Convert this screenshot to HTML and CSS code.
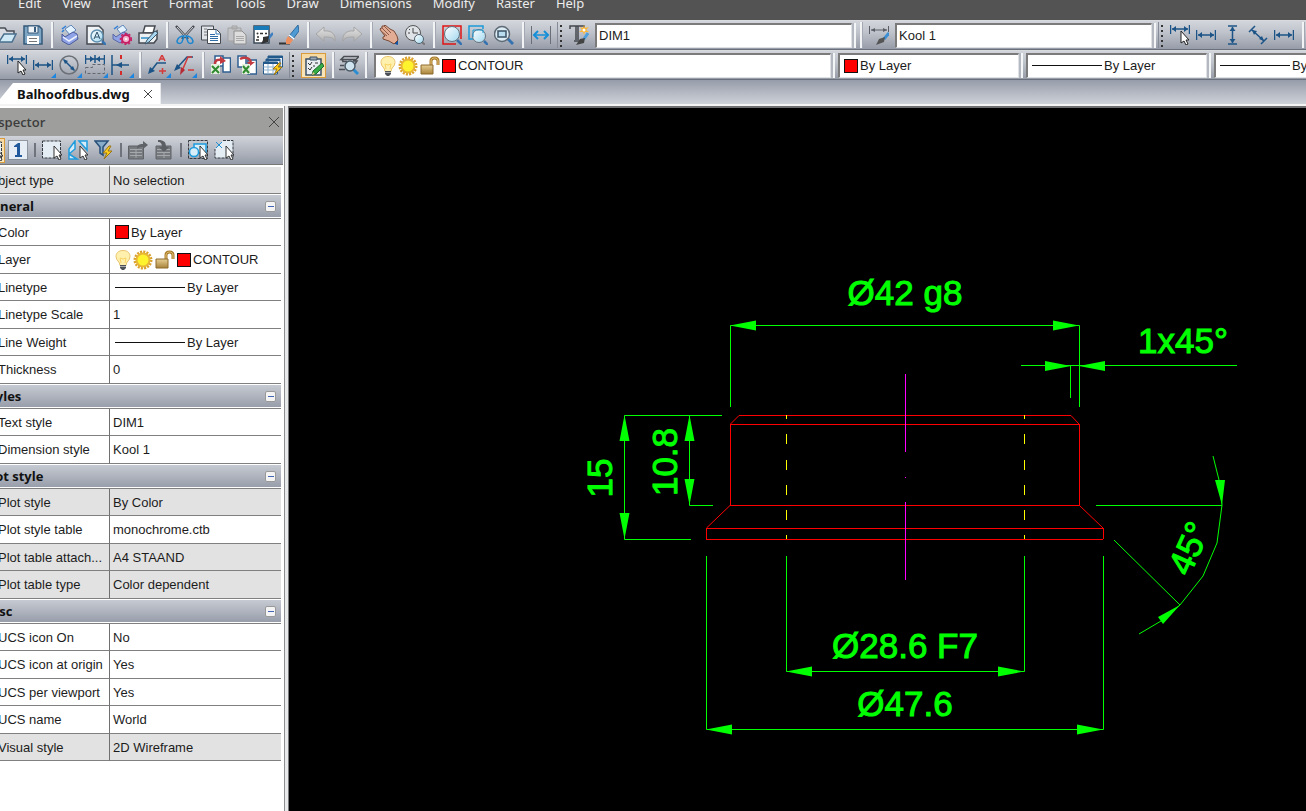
FILE: index.html
```html
<!DOCTYPE html>
<html lang="en">
<head>
  <meta charset="UTF-8">
  <title>Balhoofdbus.dwg</title>
  <link rel="stylesheet" href="styles.css">
</head>
<body>
  <!-- icon set -->
  <svg class="defs" width="0" height="0">
    <defs>
      <linearGradient id="glass" x1="0" y1="0" x2="1" y2="1"><stop offset="0" stop-color="#fff"/><stop offset="1" stop-color="#9fd8f0"/></linearGradient>
      <linearGradient id="gold" x1="0" y1="0" x2="0" y2="1"><stop offset="0" stop-color="#e8cf95"/><stop offset="1" stop-color="#a8823a"/></linearGradient>
      <linearGradient id="grey" x1="0" y1="0" x2="0" y2="1"><stop offset="0" stop-color="#e2e2e2"/><stop offset="1" stop-color="#b4b4b4"/></linearGradient>
    </defs>
    <symbol id="open" viewBox="0 0 20 20"><path d="M1 16V3h7l2 3h7v3" fill="#d8dce2" stroke="#4a4f57" stroke-width="1.5"/><path d="M2 17L7 9h12l-4 8z" fill="#cfe9f7" stroke="#4a6f8f" stroke-width="1.5"/></symbol>
    <symbol id="save" viewBox="0 0 20 20"><path d="M1 1h15l3 3v15H1z" fill="#7fa6c4" stroke="#35597a" stroke-width="1.5"/><path d="M5 1h10v7H5z" fill="#eef3f7" stroke="#35597a"/><path d="M11 2h2v5h-2z" fill="#35597a"/><path d="M4 11h12v8H4z" fill="#fff"/><path d="M6 13.5h8M6 16.5h8" stroke="#777"/></symbol>
    <symbol id="printer" viewBox="0 0 20 20"><path d="M5 4l6-4 5 5-6 5z" fill="#e3f2ff" stroke="#5f83b5"/><path d="M2 9l3 3 8-5 4 2 1 5-9 6-7-4z" fill="#8fa3e6" stroke="#4a5a9c"/><path d="M3 12l6 4 8-5" fill="none" stroke="#eef2ff" stroke-width="1.5"/><path d="M2 4l4-3M2 7l2-2" stroke="#2f7fd8" stroke-width="1.5"/></symbol>
    <symbol id="preview" viewBox="0 0 20 20"><path d="M1 1h12l4 4v14H1z" fill="#f0f3f6" stroke="#454a50" stroke-width="1.5"/><path d="M16 16l4 4" stroke="#3572b0" stroke-width="2.5"/><circle cx="11" cy="11" r="6" fill="url(#glass)" stroke="#5f8fae" stroke-width="1.5"/><path d="M8 14l3-7 3 7M9 12h4" fill="none" stroke="#30506a"/></symbol>
    <symbol id="printset" viewBox="0 0 20 20"><path d="M5 4l6-4 4 5-6 4z" fill="#e3f2ff" stroke="#5f83b5"/><path d="M1 9l3 3 7-5 5 2 0 4-8 5-7-4z" fill="#8fa3e6" stroke="#5a68a5"/><path d="M2 4l4-3" stroke="#2f7fd8" stroke-width="1.5"/><circle cx="14" cy="14" r="4" fill="#f3b7d0" stroke="#c81e63" stroke-width="2"/><circle cx="14" cy="14" r="5.5" fill="none" stroke="#c81e63" stroke-width="1.5" stroke-dasharray="2 2"/><circle cx="14" cy="14" r="1" fill="#fff"/></symbol>
    <symbol id="batch" viewBox="0 0 20 20"><path d="M5 8l2-7h10l-2 7z" fill="#fff" stroke="#454a50" stroke-width="1.5"/><path d="M1 8h15l3-2v8l-3 4H1z" fill="#eceff2" stroke="#454a50" stroke-width="1.5"/><path d="M3 13h10" stroke="#2f8fc8" stroke-width="1.5"/><path d="M20 8l-9 9-4 2 2-4 8-9z" fill="#a9d8f2" stroke="#3c5468"/></symbol>
    <symbol id="cut" viewBox="0 0 20 20"><path d="M1 1l12 13M19 1L7 14" stroke="#44484e" stroke-width="2.5"/><path d="M2 2l10 11M18 2L8 13" stroke="#d5d8dc"/><path d="M9 11c-3 0-6 2-7 5 0 3 4 3 5 1zM11 11c3 0 6 2 7 5 0 3-4 3-5 1z" fill="none" stroke="#1d86d0" stroke-width="1.5"/></symbol>
    <symbol id="copy" viewBox="0 0 20 20"><path d="M.5 1h12v14H.5z" fill="#e1e5ea" stroke="#454a50"/><path d="M3 4h3M3 7h3M3 10h3" stroke="#777"/><path d="M6.5 4.5h9l4 4v10h-13z" fill="#fff" stroke="#454a50"/><path d="M15 5v4h4" fill="none" stroke="#3578b5"/><path d="M9 9.5h5M9 11.5h8M9 13.5h8M9 15.5h8" stroke="#2f6da8"/></symbol>
    <symbol id="paste" viewBox="0 0 20 20"><path d="M1 3h13v13H1zM5 1h5v3H5z" fill="#c3c4c7" stroke="#a3a3a3"/><path d="M7 6h8l4 4v9H7z" fill="#ddd" stroke="#8e8e8e"/><path d="M9 11.5h8M9 13.5h8M9 15.5h8" stroke="#aaa"/></symbol>
    <symbol id="props" viewBox="0 0 20 20"><path d="M1 1h15v17H1z" fill="#fff" stroke="#3b4a58" stroke-width="1.5"/><path d="M1 1h15v4H1z" fill="#197bb8"/><circle cx="4.5" cy="8.5" r="1" fill="#333"/><path d="M7 8.5h3M12 8.5h2M4 12h2M3 15h3" stroke="#333" stroke-width="1.5"/><path d="M20 8l-5 6" stroke="#3c7ec0" stroke-width="2.5"/><path d="M16 11l-6 1 0 3-2 4 7-2z" fill="#333"/></symbol>
    <symbol id="erase" viewBox="0 0 20 20"><path d="M0 18.5h11" stroke="#333" stroke-width="2"/><path d="M19 0l1 6-6 8-4-3z" fill="#4d9ad4" stroke="#2e6a9c"/><path d="M9 11l5 4-3 4H7V15z" fill="#ee8e5d"/><path d="M10 10l5 4" stroke="#fff" stroke-width="1.5"/></symbol>
    <symbol id="undo" viewBox="0 0 20 20"><path d="M0 9l8-7v4c8-1 12 4 11 10-2-4-6-4-11-4v4z" fill="url(#grey)" stroke="#a5a5a5"/></symbol>
    <symbol id="redo" viewBox="0 0 20 20"><path d="M20 9l-8-7v4C4 5 0 10 1 16c2-4 6-4 11-4v4z" fill="url(#grey)" stroke="#a5a5a5"/></symbol>
    <symbol id="hand" viewBox="0 0 20 20"><path d="M13 18l6-5v7z" fill="#1252a5"/><path d="M1 4l1-1 1 0 0-2 2 0 1-1 5 4 4 2 3 5 1 4-4 4-5-3-6-2 0-2 2-1-4-5z" fill="#e2ad94" stroke="#7a4a38"/><path d="M3 3l7 7M5 1l7 7M2 6l6 5" stroke="#8e5946"/></symbol>
    <symbol id="zoomtime" viewBox="0 0 20 20"><circle cx="8" cy="8" r="7.5" fill="#dfe3e8" stroke="#555"/><path d="M8 3v5h5M3 8h2M4 4l1 1" fill="none" stroke="#444"/><path d="M17 17l3 3" stroke="#777" stroke-width="2"/><circle cx="14" cy="14" r="4.5" fill="url(#glass)" stroke="#51606d"/></symbol>
    <symbol id="zoomext" viewBox="0 0 20 20"><path d="M14 19H1V1h18v13" fill="none" stroke="#e01414" stroke-width="1.5"/><path d="M15 15l5 5" stroke="#3572b0" stroke-width="2.5"/><circle cx="10" cy="9" r="7.5" fill="url(#glass)" stroke="#66727d"/></symbol>
    <symbol id="zoomwin" viewBox="0 0 20 20"><path d="M5 14H1V1h14v3" fill="none" stroke="#1d9bd8" stroke-width="1.5"/><path d="M16 16l4 4" stroke="#3572b0" stroke-width="2.5"/><circle cx="11" cy="11" r="6.5" fill="url(#glass)" stroke="#66727d"/><path d="M5 5h10v3M5 5v7" fill="none" stroke="#1d9bd8"/></symbol>
    <symbol id="zoomprev" viewBox="0 0 20 20"><path d="M13 13l6 6" stroke="#3572b0" stroke-width="3"/><circle cx="8" cy="9" r="7.5" fill="#dcecf4" stroke="#5e6a75" stroke-width="1.5"/><path d="M4 6h8v6H4z" fill="#b9ddee" stroke="#3b5166" stroke-width="1.5"/></symbol>
    <symbol id="dist" viewBox="0 0 20 20"><path d="M.5 1v18M19.5 1v18" stroke="#6a6f77"/><path d="M4 10h12" stroke="#158fd8" stroke-width="1.5"/><path d="M7 6l-4 4 4 4M13 6l4 4-4 4" fill="none" stroke="#158fd8" stroke-width="2"/></symbol>
    <symbol id="tstyle" viewBox="0 0 20 20"><path d="M1 4V1h14v3M7 1v14M9 1v14M5 16h6" fill="none" stroke="#44484e" stroke-width="1.5"/><path d="M19 8l-4 6" stroke="#4ba0dd" stroke-width="3"/><path d="M16 13l-5 1-4 6 8-2z" fill="#444"/><path d="M15 0l1 3 4-1-3 3 3 2-4 0-1 3-1-3-4 0 3-2-2-3 3 1z" fill="#ffb52e"/><circle cx="15" cy="5" r="1.5" fill="#fff"/></symbol>
    <symbol id="dimstyle" viewBox="0 0 20 20"><path d="M.5 1v8M19.5 1v6M2 5h16" stroke="#5b5f65"/><path d="M2 5l4-2v4zM18 5l-4-2v4z" fill="#5b5f65"/><path d="M20 8l-5 6" stroke="#3c8fd4" stroke-width="3"/><path d="M16 12l-6 2-3 6 8-3z" fill="#555"/></symbol>
    <symbol id="dimh" viewBox="0 0 20 20"><path d="M.5 5v10M19.5 5v10M2 10h16" stroke="#1c5487" stroke-width="1.5"/><path d="M2 10l4-3v6zM18 10l-4-3v6z" fill="#1c5487"/></symbol>
    <symbol id="dimv" viewBox="0 0 20 20"><path d="M6 1h9M6 19h9M10.5 2v16" stroke="#1c5487" stroke-width="1.5"/><path d="M10.5 2l-3 4h6zM10.5 18l-3-4h6z" fill="#1c5487"/></symbol>
    <symbol id="dima" viewBox="0 0 20 20"><path d="M1 7l6-6M13 19l6-6M4 5l12 11" stroke="#1c5487" stroke-width="1.5"/><path d="M4 5l2 5 3-4zM16 16l-5-2 3-3z" fill="#1c5487"/></symbol>
    <symbol id="dimpick" viewBox="0 0 20 20"><path d="M.5 0v9M19.5 0v9M2 4h16" stroke="#1c5487" stroke-width="1.5"/><path d="M2 4l4-3v6zM18 4l-4-3v6z" fill="#1c5487"/><path d="M11 6v12l3-2 2 4 2-1-2-4h3z" fill="#fff" stroke="#222"/></symbol>
    <symbol id="dimdia" viewBox="0 0 20 20"><circle cx="10" cy="10" r="9" fill="none" stroke="#6c7178" stroke-width="1.5"/><path d="M5 5l10 10" stroke="#1c5487" stroke-width="1.5"/><path d="M4 4l2 5 3-3zM16 16l-2-5-3 3z" fill="#1c5487"/></symbol>
    <symbol id="dimbase" viewBox="0 0 20 20"><path d="M.5 0v9M10 0v8M19.5 0v9M1 4h18" stroke="#1c5487" stroke-width="1.5"/><path d="M9 4L5 1v6zM11 4l4-3v6z" fill="#1c5487"/><path d="M.5 12.5h7v-3h12v9H.5z" fill="none" stroke="#62676f" stroke-dasharray="3 2"/></symbol>
    <symbol id="dimbreak" viewBox="0 0 20 20"><path d="M1 0v20M1 10h17" stroke="#1c5487" stroke-width="1.5"/><path d="M5 10l6-3v6z" fill="#1c5487"/><path d="M10 0v4M10 16v4" stroke="#d42a2a" stroke-width="2"/></symbol>
    <symbol id="leadadd" viewBox="0 0 20 20"><path d="M3 16L9 8h9" fill="none" stroke="#1c5487" stroke-width="1.5"/><path d="M0 19l2-7 5 4z" fill="#1c5487"/><path d="M11 6l3-6 3 6M12 4h4M11 16h7M14.5 13v6" fill="none" stroke="#d43b3b" stroke-width="1.5"/></symbol>
    <symbol id="leaddel" viewBox="0 0 20 20"><path d="M2 14L13 2h6" fill="none" stroke="#1c5487" stroke-width="1.5"/><path d="M0 16l3-7 4 4z" fill="#1c5487"/><path d="M8 16l6-14h4M14 15h6" fill="none" stroke="#d43b3b" stroke-width="1.5"/><path d="M6 20l1-8 4 3z" fill="#b52a35"/></symbol>
    <symbol id="xlsout" viewBox="0 0 20 20"><path d="M12 3h7.5v14H12zM4 1h8v10H4z" fill="#fff" stroke="#2f5f91" stroke-width="1.5"/><path d="M4 9c0-4 3-5 7-4" fill="none" stroke="#c23a40" stroke-width="2.5"/><path d="M9 1l6 5-6 3z" fill="#c23a40"/><path d="M0 9h9v10H0z" fill="#e5f0df"/><path d="M1 11l7 7M8 11l-7 7" stroke="#2f8a2f" stroke-width="2"/></symbol>
    <symbol id="xlsin" viewBox="0 0 20 20"><path d="M1 1h8v11H1zM11 5h8.5v14H11z" fill="#fff" stroke="#2f5f91" stroke-width="1.5"/><path d="M3 4c4-2 9-2 11 3" fill="none" stroke="#c23a40" stroke-width="2.5"/><path d="M10 7h8l-5 4z" fill="#c23a40"/><path d="M5 9h8v10H5z" fill="#e5f0df"/><path d="M6 11l6 7M12 11l-6 7" stroke="#2f8a2f" stroke-width="2"/></symbol>
    <symbol id="tables" viewBox="0 0 20 20"><path d="M5 1h14.5v11H5zM3 4h14v11H3z" fill="#e7f1f9" stroke="#23588a"/><path d="M.5 7h14v12H.5z" fill="#fff" stroke="#23588a"/><path d="M.5 8h14M3 5h14M5 2h14" stroke="#23588a" stroke-width="2"/><path d="M.5 12h14M.5 15h14M5 9v10M10 9v10" stroke="#8fb2d1"/><path d="M16 8l-6 6h4l-3 6 8-8h-4l3-4z" fill="#ffcf1a" stroke="#9a7414"/></symbol>
    <symbol id="check" viewBox="0 0 20 20"><path d="M2 3h15v16H2z" fill="#e9eef3" stroke="#3c5266" stroke-width="1.5"/><path d="M6 1h7v3H6z" fill="#9aa6b2" stroke="#3c5266"/><path d="M4 7l2 2 2-3M4 12l2 2 2-3M11 7h3M9 10h2" fill="none" stroke="#333"/><path d="M18 7l2 3-8 8-4 1 1-4z" fill="#35ab45" stroke="#1d6a2a"/><path d="M8 19l1-3 2 2z" fill="#eec48b"/></symbol>
    <symbol id="layers" viewBox="0 0 20 20"><path d="M5 1.5h15l-3 3H2zM3 6.5h5M1 10.5h4M0 14.5h6M3 6l2-2M14 6h4l-2 3" fill="none" stroke="#4b4f55" stroke-width="1.5"/><path d="M14 14l5 5" stroke="#2c8ed0" stroke-width="3"/><circle cx="11" cy="11" r="5" fill="#cfe4ef" stroke="#4b5a67" stroke-width="1.5"/></symbol>
    <symbol id="bulb" viewBox="0 0 16 20"><path d="M8 .5c5 0 7 3 7 6 0 4-4 5-4 9H5c0-4-4-5-4-9 0-3 2-6 7-6z" fill="#fff0ae" stroke="#e8c46b"/><path d="M6 13l-1-5 3 1 3-1-1 5" fill="none" stroke="#f8d463"/><path d="M5 15h6v3l-2 2H7l-2-2z" fill="#4d5158"/><path d="M5 16.5h6" stroke="#aaa"/></symbol>
    <symbol id="sun" viewBox="0 0 20 20"><circle cx="10" cy="10" r="8" fill="none" stroke="#dba12d" stroke-width="3" stroke-dasharray="2 1.14"/><circle cx="10" cy="10" r="7.5" fill="#e8b637"/><circle cx="10" cy="10" r="5.5" fill="#fff32e"/></symbol>
    <symbol id="lock" viewBox="0 0 20 20"><path d="M11 9V5c0-4 7-4 7 0v4" fill="none" stroke="#a87a28" stroke-width="3"/><path d="M11 9V5c0-4 7-4 7 0v4" fill="none" stroke="#e2c277"/><path d="M1 9h12v9H1z" fill="url(#gold)" stroke="#8d6a2c"/></symbol>
    <symbol id="one" viewBox="0 0 20 20"><path d="M.5.5h19v19H.5z" fill="#e7edf4" stroke="#4c5663" stroke-dasharray="1 1"/><path d="M6 6l4-3h2v12h2v2H7v-2h2V7H6z" fill="#205a9c"/></symbol>
    <symbol id="pick" viewBox="0 0 20 20"><path d="M.5 1h18v17H.5z" fill="#e4edf3" stroke="#353a40" stroke-dasharray="3 1"/><path d="M12 6v12l3-2 2 4 2-1-2-4h3z" fill="#fff" stroke="#333"/></symbol>
    <symbol id="swap" viewBox="0 0 20 20"><path d="M7 1v8L1 14V9zM1 14l8 5H1zM11 1h8v9z" fill="#d6edf9" stroke="#1e9bdd" stroke-width="1.5"/><path d="M12 6v12l3-2 2 4 2-1-2-4h3z" fill="#fff" stroke="#333"/></symbol>
    <symbol id="filter" viewBox="0 0 20 20"><path d="M1 1h13L9 7v8l-3-2V7z" fill="#87abc9" stroke="#274f78" stroke-width="1.5"/><path d="M15 6l-6 7h4l-3 6 8-8h-4l3-5z" fill="#ffcf1a" stroke="#9a7414"/></symbol>
    <symbol id="sheetout" viewBox="0 0 20 20"><path d="M.5 6h15v13H.5z" fill="#777a7e" stroke="#606367"/><path d="M2 9.5h12M2 12.5h12M2 15.5h12M8 9v9" stroke="#a6a8ab"/><path d="M9 9c0-4 2-5 6-5V1l5 4-5 4V7c-3 0-4 0-6 2z" fill="#5f6266"/></symbol>
    <symbol id="sheetin" viewBox="0 0 20 20"><path d="M2 6h15v13H2z" fill="#777a7e" stroke="#606367"/><path d="M3 9.5h13M3 12.5h13M3 15.5h13M10 11v7" stroke="#a6a8ab"/><path d="M4 0c6 0 8 2 8 7h3l-5 5-5-5h3c0-3-1-5-4-5z" fill="#5b5e62"/></symbol>
    <symbol id="pickobj" viewBox="0 0 20 20"><path d="M.5.5h19v18H.5z" fill="none" stroke="#353a40" stroke-dasharray="3 1"/><path d="M6 4h12v9H6z" fill="#d8effa" stroke="#1e9bdd" stroke-width="1.5"/><circle cx="6" cy="12" r="4.5" fill="#d8effa" stroke="#1e9bdd" stroke-width="1.5"/><path d="M12 6v12l3-2 2 4 2-1-2-4h3z" fill="#fff" stroke="#333"/></symbol>
    <symbol id="pickx" viewBox="0 0 20 20"><path d="M9 .5h10V18H1V9" fill="#e4edf3" stroke="#353a40" stroke-dasharray="3 1"/><path d="M2 2l6 6M8 2L2 8" stroke="#1e8fd0"/><path d="M12 6v12l3-2 2 4 2-1-2-4h3z" fill="#fff" stroke="#333"/></symbol>
  </svg>

  <nav class="menu">
    <a href="#">Edit</a>
    <a href="#">View</a>
    <a href="#">Insert</a>
    <a href="#">Format</a>
    <a href="#">Tools</a>
    <a href="#">Draw</a>
    <a href="#">Dimensions</a>
    <a href="#">Modify</a>
    <a href="#">Raster</a>
    <a href="#">Help</a>
  </nav>

  <div class="toolbar standard">
    <button class="tool" aria-label="Open"><svg><use href="#open"/></svg></button>
    <button class="tool" aria-label="Save"><svg><use href="#save"/></svg></button>
    <span class="sep"></span>
    <button class="tool" aria-label="Print"><svg><use href="#printer"/></svg></button>
    <button class="tool" aria-label="Print preview"><svg><use href="#preview"/></svg></button>
    <button class="tool" aria-label="Print settings"><svg><use href="#printset"/></svg></button>
    <button class="tool" aria-label="Batch print"><svg><use href="#batch"/></svg></button>
    <span class="sep"></span>
    <button class="tool" aria-label="Cut"><svg><use href="#cut"/></svg></button>
    <button class="tool" aria-label="Copy"><svg><use href="#copy"/></svg></button>
    <button class="tool" aria-label="Paste"><svg><use href="#paste"/></svg></button>
    <button class="tool" aria-label="Match properties"><svg><use href="#props"/></svg></button>
    <button class="tool" aria-label="Erase"><svg><use href="#erase"/></svg></button>
    <span class="sep"></span>
    <button class="tool" aria-label="Undo"><svg><use href="#undo"/></svg></button>
    <button class="tool" aria-label="Redo"><svg><use href="#redo"/></svg></button>
    <span class="sep"></span>
    <button class="tool" aria-label="Pan"><svg><use href="#hand"/></svg></button>
    <button class="tool" aria-label="Zoom realtime"><svg><use href="#zoomtime"/></svg></button>
    <span class="sep"></span>
    <button class="tool" aria-label="Zoom extents"><svg><use href="#zoomext"/></svg></button>
    <button class="tool" aria-label="Zoom window"><svg><use href="#zoomwin"/></svg></button>
    <button class="tool" aria-label="Zoom previous"><svg><use href="#zoomprev"/></svg></button>
    <span class="sep"></span>
    <button class="tool" aria-label="Distance"><svg><use href="#dist"/></svg></button>
    <span class="grip"></span>
    <button class="tool" aria-label="Text styles"><svg><use href="#tstyle"/></svg></button>
    <div class="combo style-combo">
      <select aria-label="Text style"><option>DIM1</option></select>
    </div>
    <span class="sep"></span>
    <button class="tool" aria-label="Dimension styles"><svg><use href="#dimstyle"/></svg></button>
    <div class="combo style-combo">
      <select aria-label="Dimension style"><option>Kool 1</option></select>
    </div>
    <span class="grip"></span>
    <button class="tool" aria-label="Smart dimension"><svg><use href="#dimpick"/></svg></button>
    <button class="tool" aria-label="Horizontal dimension"><svg><use href="#dimh"/></svg></button>
    <button class="tool" aria-label="Vertical dimension"><svg><use href="#dimv"/></svg></button>
    <button class="tool" aria-label="Aligned dimension"><svg><use href="#dima"/></svg></button>
    <button class="tool" aria-label="Linear dimension"><svg><use href="#dimh"/></svg></button>
    <span class="sep"></span>
  </div>

  <div class="toolbar layers">
    <button class="tool" aria-label="Smart dimension"><svg><use href="#dimpick"/></svg></button>
    <button class="tool drop" aria-label="Linear dimension"><svg><use href="#dimh"/></svg></button>
    <button class="tool drop" aria-label="Diameter dimension"><svg><use href="#dimdia"/></svg></button>
    <button class="tool drop" aria-label="Baseline dimension"><svg><use href="#dimbase"/></svg></button>
    <button class="tool drop" aria-label="Dimension break"><svg><use href="#dimbreak"/></svg></button>
    <span class="sep"></span>
    <button class="tool drop" aria-label="Add leader"><svg><use href="#leadadd"/></svg></button>
    <button class="tool drop" aria-label="Remove leader"><svg><use href="#leaddel"/></svg></button>
    <span class="sep"></span>
    <button class="tool" aria-label="Export table"><svg><use href="#xlsout"/></svg></button>
    <button class="tool" aria-label="Import table"><svg><use href="#xlsin"/></svg></button>
    <button class="tool" aria-label="Update tables"><svg><use href="#tables"/></svg></button>
    <span class="grip"></span>
    <div class="layer-tools">
      <button class="tool checked" aria-label="Layer manager"><svg><use href="#check"/></svg></button>
      <span class="sep"></span>
      <button class="tool" aria-label="Layer preview"><svg><use href="#layers"/></svg></button>
      <span class="sep"></span>
    </div>
    <div class="combos">
      <div class="combo layer-combo">
        <svg class="bulb"><use href="#bulb"/></svg>
        <svg class="ico"><use href="#sun"/></svg>
        <svg class="ico"><use href="#lock"/></svg>
        <span class="swatch"></span>
        <select aria-label="Layer"><option>CONTOUR</option></select>
      </div>
      <div class="combo prop-combo">
        <span class="swatch"></span>
        <select aria-label="Color"><option>By Layer</option></select>
      </div>
      <div class="combo prop-combo">
        <span class="rule"></span>
        <select aria-label="Linetype"><option>By Layer</option></select>
      </div>
      <div class="combo prop-combo">
        <span class="rule"></span>
        <select aria-label="Line weight"><option>By Layer</option></select>
      </div>
    </div>
  </div>

  <div class="tabs">
    <div class="tab">
      <span>Balhoofdbus.dwg</span>
      <button class="close" aria-label="Close tab"><svg viewBox="0 0 12 12"><path d="M2 2l8 8M10 2l-8 8"/></svg></button>
    </div>
  </div>

  <div class="workspace">
    <aside class="inspector">
      <div class="pane-title">
        <span>Inspector</span>
        <button class="close" aria-label="Close inspector"><svg viewBox="0 0 12 12"><path d="M1 1l10 10M11 1l-10 10"/></svg></button>
      </div>
      <div class="pane-tools">
        <button class="tool checked" aria-label="Select all"><svg><use href="#pick"/></svg></button>
        <button class="tool" aria-label="Single selection"><svg><use href="#one"/></svg></button>
        <span class="bar"></span>
        <button class="tool" aria-label="Select"><svg><use href="#pick"/></svg></button>
        <button class="tool" aria-label="Invert selection"><svg><use href="#swap"/></svg></button>
        <button class="tool" aria-label="Quick filter"><svg><use href="#filter"/></svg></button>
        <span class="bar"></span>
        <button class="tool" aria-label="Export properties"><svg><use href="#sheetout"/></svg></button>
        <button class="tool" aria-label="Import properties"><svg><use href="#sheetin"/></svg></button>
        <span class="bar"></span>
        <button class="tool" aria-label="Select similar"><svg><use href="#pickobj"/></svg></button>
        <button class="tool" aria-label="Clear selection"><svg><use href="#pickx"/></svg></button>
      </div>
      <table class="props">
        <tbody>
          <tr class="ro object"><th>Object type</th><td>No selection</td></tr>
        </tbody>
        <tbody>
          <tr class="section"><th colspan="2"><div>General<button class="fold" aria-label="Collapse General"></button></div></th></tr>
          <tr><th>Color</th><td><div class="val"><span class="swatch"></span>By Layer</div></td></tr>
          <tr><th>Layer</th><td><div class="val"><svg class="bulb"><use href="#bulb"/></svg><svg class="ico"><use href="#sun"/></svg><svg class="ico"><use href="#lock"/></svg><span class="swatch"></span>CONTOUR</div></td></tr>
          <tr><th>Linetype</th><td><div class="val"><span class="rule"></span>By Layer</div></td></tr>
          <tr><th>Linetype Scale</th><td>1</td></tr>
          <tr><th>Line Weight</th><td><div class="val"><span class="rule"></span>By Layer</div></td></tr>
          <tr><th>Thickness</th><td>0</td></tr>
        </tbody>
        <tbody>
          <tr class="section"><th colspan="2"><div>Styles<button class="fold" aria-label="Collapse Styles"></button></div></th></tr>
          <tr><th>Text style</th><td>DIM1</td></tr>
          <tr><th>Dimension style</th><td>Kool 1</td></tr>
        </tbody>
        <tbody>
          <tr class="section"><th colspan="2"><div>Plot style<button class="fold" aria-label="Collapse Plot style"></button></div></th></tr>
          <tr class="ro"><th>Plot style</th><td>By Color</td></tr>
          <tr><th>Plot style table</th><td>monochrome.ctb</td></tr>
          <tr class="ro"><th>Plot table attach...</th><td>A4 STAAND</td></tr>
          <tr class="ro"><th>Plot table type</th><td>Color dependent</td></tr>
        </tbody>
        <tbody>
          <tr class="section"><th colspan="2"><div>Misc<button class="fold" aria-label="Collapse Misc"></button></div></th></tr>
          <tr><th>UCS icon On</th><td>No</td></tr>
          <tr><th>UCS icon at origin</th><td>Yes</td></tr>
          <tr><th>UCS per viewport</th><td>Yes</td></tr>
          <tr><th>UCS name</th><td>World</td></tr>
          <tr class="ro"><th>Visual style</th><td>2D Wireframe</td></tr>
        </tbody>
      </table>
    </aside>

    <main class="canvas">
      <svg viewBox="289 108 1017 703">
        <!-- bushing outline -->
        <g class="contour">
          <path d="M739 415.5H1071M730 424.5H1079M730 505.5H1079M706 528.5H1103M706 539.5H1103"/>
          <path d="M730.5 424V505M1079.5 424V505M706.5 528V539M1103.5 528V539"/>
          <path d="M739 415.5L730.5 424M1071 415.5L1079 424M730.5 505L706.5 528M1079 505L1103 528"/>
        </g>
        <!-- bore, hidden lines -->
        <path class="hidden" d="M786.5 415v4m0 15v10m0 16v10m0 15v10m0 15v10m0 15v4M1024.5 415v4m0 15v10m0 16v10m0 15v10m0 15v10m0 15v4"/>
        <!-- centre line -->
        <path class="centre" d="M905.5 374V452M905.5 477v1M905.5 502V580"/>
        <!-- dimension and extension lines -->
        <g class="dim">
          <path d="M730.5 407V325.5H1079.5V407"/>
          <path d="M1021 365.5H1237M1070.5 366V398"/>
          <path d="M722 415.5H624.5V539.5H691M689.5 416V505.5H713"/>
          <path d="M786.5 556V671.5H1024.5V556M706.5 556V729.5H1103.5V556"/>
          <path d="M1096 505.5H1222"/>
          <path d="M1114 540L1180 605M1213 456L1219 480L1222 505L1217 543L1203 576L1180 605L1161 621L1139 634"/>
        </g>
        <g class="arrow">
          <path d="M730 325.5l26-5v10zM1079 325.5l-26-5v10z"/>
          <path d="M1071 366l-26-5v10zM1079 366l26-5v10z"/>
          <path d="M624.5 415l-5 26h10zM624.5 539l-5-26h10z"/>
          <path d="M689.5 415l-5 26h10zM689.5 505l-5-26h10z"/>
          <path d="M786 671.5l26-5v10zM1024 671.5l-26-5v10z"/>
          <path d="M706 729.5l26-5v10zM1103 729.5l-26-5v10z"/>
          <path d="M1222 505l-7-25 10 0zM1180 605l-22 12 5 7z"/>
        </g>
        <g class="label">
          <text x="905" y="305">Ø42 g8</text>
          <text x="1183" y="353">1x45°</text>
          <text x="905" y="658">Ø28.6 F7</text>
          <text x="905" y="716">Ø47.6</text>
          <text transform="translate(612 478) rotate(-90)">15</text>
          <text transform="translate(677 462) rotate(-90)">10.8</text>
          <text transform="translate(1200 553) rotate(-66)">45°</text>
        </g>
      </svg>
    </main>
  </div>
</body>
</html>
```
FILE: styles.css
```css
* { box-sizing: border-box; }
html { overflow: hidden; height: 100%; background: #fff; }
/* the window hangs off the top left corner of the screen */
body { margin: -14px 0 0 -20px; height: calc(100vh + 14px); display: flex; flex-direction: column; overflow: hidden; font-family: "Liberation Sans", Arial, sans-serif; font-size: 13px; color: #1c1c1c; }
button { border: 0; padding: 0; background: none; }
.defs { position: absolute; }

/* menu */
.menu { flex: none; height: 34px; padding-left: 38px; display: flex; align-items: center; gap: 21px; background: #535353; font-family: "Noto Sans", sans-serif; }
.menu a { color: #ececec; text-decoration: none; }

/* toolbars */
.toolbar { flex: none; height: 30px; display: flex; align-items: center; gap: 6px; background: linear-gradient(#d2d5db, #bfc3cb 40%, #969ca8); border-bottom: 1px solid #69707b; border-top: 1px solid #d8dade; overflow: hidden; }
.standard { padding-left: 17px; }
.layers { padding-left: 27px; }
.tool { position: relative; flex: none; width: 20px; height: 20px; }
.tool svg { display: block; width: 20px; height: 20px; }
.checked { width: 25px; height: 25px; padding: 2px; background: linear-gradient(#f6d9a3, #f9e6bd); border: 1px solid #d99c3c; }
.drop::after { content: ""; position: absolute; right: -3px; bottom: -3px; border-left: 5px solid transparent; border-bottom: 5px solid #1f86e0; }
.sep { flex: none; width: 5px; height: 26px; background: linear-gradient(#f2f3f5, #f2f3f5) 2px 0 / 2px 100% no-repeat; border-right: 1px solid #a3a8b2; }
.grip { flex: none; width: 6px; height: 26px; background: linear-gradient(#333 2px, transparent 2px) 2px 3px / 2px 5px repeat-y; border-left: 1px solid #868c97; }
.layer-tools { flex: none; display: flex; align-items: center; gap: 4px; }
.combos { display: flex; gap: 7px; }

.combo { flex: none; height: 25px; display: flex; align-items: center; gap: 2px; padding-left: 4px; background: #fff; border: 1px solid #dfe1e5; border-top: 2px solid #7b7b7b; border-left: 2px solid #7b7b7b; box-shadow: 2px 0 #b4b8c0, 4px 0 #f4f5f7; }
.combo select { flex: 1; min-width: 0; height: 21px; padding: 0; border: 0; background: none; appearance: none; font: inherit; color: inherit; }
.style-combo { width: 257px; padding-left: 2px; }
.layer-combo { width: 457px; }
.prop-combo { width: 181px; }

.bulb { flex: none; width: 16px; height: 20px; }
.ico { flex: none; width: 20px; height: 20px; }
.swatch { flex: none; width: 14px; height: 14px; background: #f00; border: 1px solid #111; }
.rule { flex: none; width: 70px; height: 1px; background: #111; }

/* drawing tabs */
.tabs { flex: none; height: 24px; display: flex; align-items: flex-end; background: linear-gradient(#969ca9, #ced2d9); }
.tab { height: 21px; padding: 0 7px 0 37px; display: flex; align-items: center; gap: 12px; background: #fff; clip-path: polygon(33px 0, 100% 0, 100% 100%, 20px 100%, 20px 16px); font-family: "Noto Sans", sans-serif; font-weight: 700; color: #111; }
.close { width: 12px; height: 12px; }
.close svg { display: block; width: 12px; height: 12px; fill: none; stroke: #444; }

/* workspace */
.workspace { flex: 1; min-height: 0; display: flex; border-top: 2px solid #f4f4f4; }
.inspector { flex: none; width: 309px; padding: 2px 7px 0 0; background: #fff; border-right: 1px solid #77797c; box-shadow: inset -3px 0 #e8e9eb, inset -4px 0 #8c8e91; overflow: hidden; }
.pane-title { height: 28px; padding: 0 3px 0 6px; margin-right: -2px; display: flex; align-items: center; justify-content: space-between; background: #9e9f9d; font-family: "Open Sans", sans-serif; font-weight: 600; color: #3c3c3c; }
.pane-tools { height: 29px; margin-right: -2px; display: flex; align-items: center; gap: 6px; background: linear-gradient(#d0d3d9, #969ca8); border-bottom: 1px solid #777; }
.pane-tools .checked { margin-right: -3px; }
.bar { width: 2px; height: 14px; background: #6e737c; }

.props { width: 100%; border-spacing: 0; table-layout: fixed; }
.props th, .props td { height: 27px; padding: 0; text-align: left; font-weight: 400; white-space: nowrap; border-bottom: 1px solid #808080; }
.props tr:nth-child(odd) th, .props tr:nth-child(odd) td { height: 28px; }
.props th { width: 130px; padding-left: 18px; border-right: 1px solid #707070; }
.props td { padding-left: 3px; }
.props .ro { background: #e2e2e2; }
.props tr.object:nth-child(odd) th, .props tr.object:nth-child(odd) td { height: 29px; border-top: 2px solid #fff; }
.props .object th { padding-left: 8px; }
.props tr.section:nth-child(odd) th { height: 25px; padding: 1px 0; border-right: 0; font-family: "Open Sans", sans-serif; font-weight: 700; color: #111; }
.section div { height: 22px; padding: 0 5px 0 3px; display: flex; align-items: center; justify-content: space-between; background: linear-gradient(#c6cad2, #989eaa); }
.fold { width: 11px; height: 11px; background: linear-gradient(#4465b5, #4465b5) center / 6px 1px no-repeat #f4f4f4; border: 1px solid #999; border-radius: 2px; }
.val { display: flex; align-items: center; gap: 2px; padding-left: 2px; }

/* drawing */
.canvas { flex: 1; min-width: 0; background: #000; border-top: 2px solid #6f7072; }
.canvas svg { display: block; width: 100%; height: 100%; }
.contour, .dim, .hidden, .centre { fill: none; stroke-width: 1; }
.contour { stroke: #f00; }
.hidden { stroke: #ff0; }
.centre { stroke: #f0f; }
.dim { stroke: #0f0; }
.arrow { fill: #0f0; }
.label { fill: #0f0; stroke: #0f0; stroke-width: 1; font-size: 35px; text-anchor: middle; }
```
